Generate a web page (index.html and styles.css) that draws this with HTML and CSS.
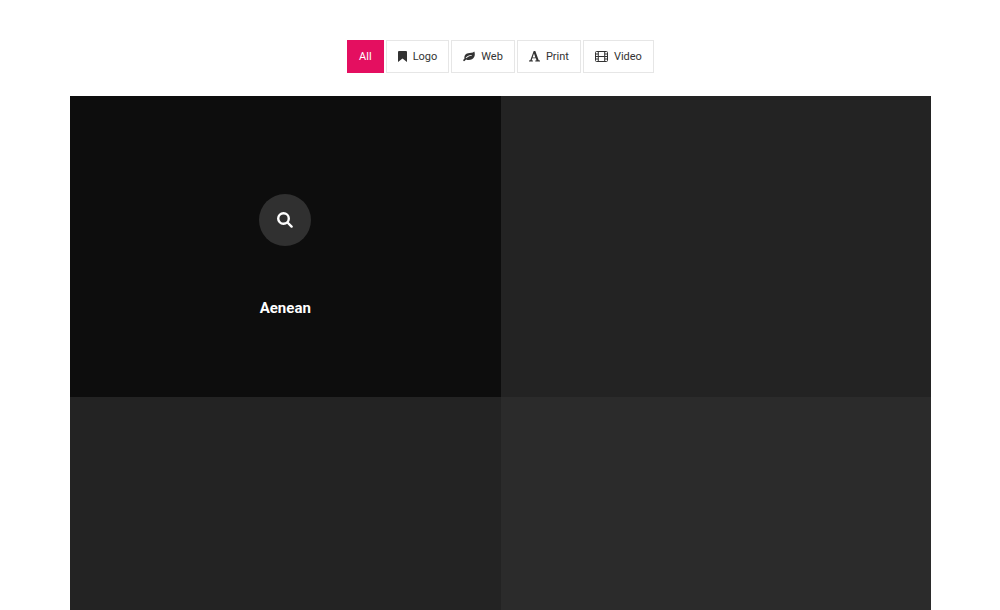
FILE: index.html
```html
<!DOCTYPE html>
<html lang="en">
<head>
<meta charset="utf-8">
<meta name="viewport" content="width=device-width, initial-scale=1">
<title>Portfolio</title>
<link rel="stylesheet" href="styles.css">
</head>
<body>
<nav class="filters" aria-label="Portfolio filter">
  <button class="filter filter-active" type="button" aria-pressed="true">All</button>
  <button class="filter" type="button"><svg class="icon-bookmark" viewBox="0 0 9 11" aria-hidden="true"><path d="M0 1Q0 0 1 0H8Q9 0 9 1V11L4.500 7.500L0 11Z"/></svg>Logo</button>
  <button class="filter" type="button"><svg class="icon-leaf" viewBox="0 0 12 11" aria-hidden="true"><path fill-rule="evenodd" d="M11.300 0.500C12.300 3 12 6.500 9 8.300C7.100 9.400 4.800 9.300 3.100 8.500C2.300 9 1.800 10.200 1 10.200C.4 10.200 0 9.600 .2 9.100C.4 8.500 1.200 8 1.500 7.500C.9 5 2.200 2.800 5 2.200C7.300 1.700 9.500 2.300 11.300 .5ZM8.400 3.900C6 3.900 4.300 5 2.900 6.500C2.500 7 3 7.500 3.500 7.100C5 5.600 6.400 4.700 8.400 4.700C9 4.700 9 3.900 8.400 3.900Z"/></svg>Web</button>
  <button class="filter" type="button"><svg class="icon-font" viewBox="0 0 11 11" aria-hidden="true"><path fill-rule="evenodd" d="M4.700 0H6.300L9.700 9.200L11 9.600V10.500H6.300V9.600L7.500 9.300L6.800 7.300H3.300L2.700 9.300L3.900 9.600V10.500H0V9.600L1.300 9.200ZM5 2.500L3.600 6.400H6.400Z"/></svg>Print</button>
  <button class="filter" type="button"><svg class="icon-film" viewBox="0 0 13 11" aria-hidden="true"><path d="M1.500.5H11.500Q12.500.5 12.500 1.500V9.500Q12.500 10.500 11.500 10.500H1.500Q.5 10.500 .5 9.500V1.500Q.5.5 1.500.5ZM3.300.5V10.500M9.700.5V10.500M3.300 5.500H9.700M.5 3H3.300M.5 5.500H3.300M.5 8H3.300M9.700 3H12.500M9.700 5.500H12.500M9.700 8H12.500"/></svg>Video</button>
</nav>
<main class="gallery">
  <article class="tile tile-open">
    <a class="zoom" href="#aenean" aria-label="View Aenean"><svg class="icon-search" viewBox="0 0 16 16" aria-hidden="true"><circle cx="6.500" cy="6.500" r="5.300"/><path d="M10.500 10.500L14.600 14.600"/></svg></a>
    <h2 class="tile-title">Aenean</h2>
  </article>
  <article class="tile"></article>
  <article class="tile"></article>
  <article class="tile tile-light"></article>
</main>
</body>
</html>
```
FILE: styles.css
```css
* {
  box-sizing: border-box;
}

body {
  margin: 0;
  padding: 40px 69px 0 70px;
  background: #fff;
  color: #333;
  font-family: Roboto, "Liberation Sans", sans-serif;
}

.filters {
  display: flex;
  flex-wrap: wrap;
  justify-content: center;
  gap: 2px;
  margin-bottom: 23px;
}

.filter {
  display: flex;
  align-items: center;
  gap: 6px;
  height: 33px;
  padding: 0 11px;
  border: 1px solid #e6e6e6;
  background: #fff;
  color: #333;
  font-family: inherit;
  font-size: 11px;
  line-height: 16px;
  cursor: pointer;
}

.filter-active {
  border-color: #e40f60;
  background: #e40f60;
  color: #fff;
}

.filter svg {
  height: 11px;
  fill: currentColor;
}

.icon-bookmark {
  width: 9px;
}

.icon-leaf {
  width: 12px;
}

.icon-font {
  width: 11px;
}

.filter .icon-film {
  width: 13px;
  fill: none;
  stroke: currentColor;
}

.gallery {
  display: grid;
  grid-template-columns: 1fr 1fr;
}

.tile {
  aspect-ratio: 430 / 301;
  background: #232323;
}

.tile-light {
  background: #2b2b2b;
}

.tile-open {
  display: flex;
  flex-direction: column;
  align-items: center;
  justify-content: center;
  gap: 52px;
  padding-top: 18px;
  background: #0d0d0d;
}

.zoom {
  display: grid;
  place-items: center;
  width: 52px;
  height: 52px;
  border-radius: 50%;
  background: #303030;
}

.icon-search {
  width: 16px;
  height: 16px;
  fill: none;
  stroke: #fff;
  stroke-width: 2.400;
  stroke-linecap: round;
}

.tile-title {
  margin: 0;
  color: #fff;
  font-size: 15px;
  font-weight: 700;
  line-height: 20px;
}
```
